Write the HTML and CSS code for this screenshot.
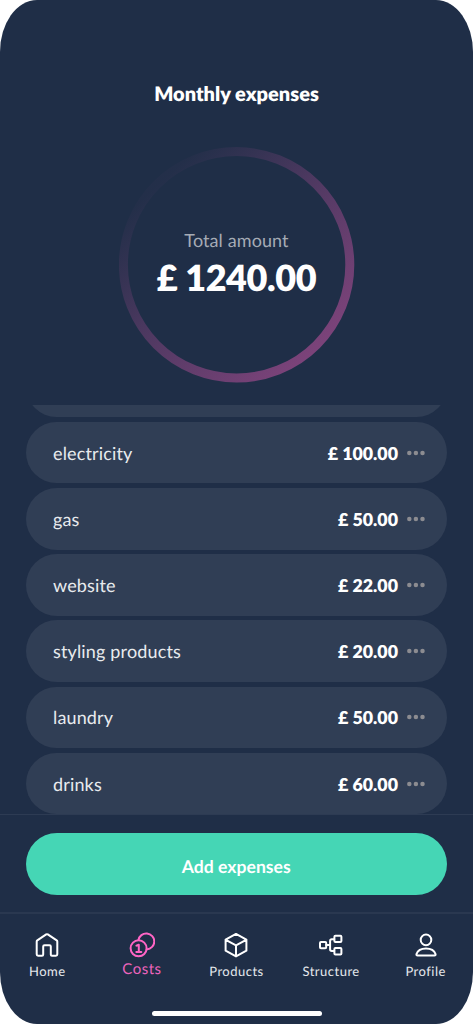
FILE: index.html
```html
<!DOCTYPE html>
<html lang="en">
<head>
<meta charset="utf-8">
<title>Monthly expenses</title>
<link rel="stylesheet" href="styles.css">
</head>
<body>
<svg width="0" height="0" class="defs" aria-hidden="true">
  <symbol id="dots" viewBox="0 0 18 6"><circle cx="2.3" cy="3" r="2.25"/><circle cx="8.9" cy="3" r="2.25"/><circle cx="15.5" cy="3" r="2.25"/></symbol>
</svg>
<div class="screen">
  <h1 class="title">Monthly expenses</h1>
  <section class="total">
    <svg class="ring" viewBox="0 0 236 236" aria-hidden="true">
      <defs>
        <linearGradient id="fade" x1="0.15" y1="0.15" x2="0.85" y2="0.9">
          <stop offset="0" stop-color="#85457f" stop-opacity="0.04"/>
          <stop offset="0.5" stop-color="#85457f" stop-opacity="0.52"/>
          <stop offset="1" stop-color="#85457f" stop-opacity="0.92"/>
        </linearGradient>
      </defs>
      <circle cx="117.6" cy="117.8" r="113.2" fill="none" stroke="url(#fade)" stroke-width="9"/>
    </svg>
    <div class="total-text">
      <span class="total-label">Total amount</span>
      <strong class="total-value">£ 1240.00</strong>
    </div>
  </section>
  <ul class="list">
    <li class="row"></li>
    <li class="row"><span class="name">electricity</span><span class="amount">£ 100.00</span><svg class="more"><use href="#dots"/></svg></li>
    <li class="row"><span class="name">gas</span><span class="amount">£ 50.00</span><svg class="more"><use href="#dots"/></svg></li>
    <li class="row"><span class="name">website</span><span class="amount">£ 22.00</span><svg class="more"><use href="#dots"/></svg></li>
    <li class="row"><span class="name">styling products</span><span class="amount">£ 20.00</span><svg class="more"><use href="#dots"/></svg></li>
    <li class="row"><span class="name">laundry</span><span class="amount">£ 50.00</span><svg class="more"><use href="#dots"/></svg></li>
    <li class="row"><span class="name">drinks</span><span class="amount">£ 60.00</span><svg class="more"><use href="#dots"/></svg></li>
  </ul>
  <div class="action"><button class="add">Add expenses</button></div>
  <nav class="tabs">
    <a class="tab">
      <svg class="icon" viewBox="0 0 26 26"><path d="M2.7 9.4V22.3Q2.7 23.7 4.1 23.7H8Q9.2 23.7 9.2 22.5V14.6Q9.2 13.3 10.5 13.3H15.5Q16.8 13.3 16.8 14.6V22.5Q16.8 23.7 18 23.7H21.9Q23.3 23.7 23.3 22.3V9.4Q23.3 8.7 22.7 8.3L13.8 2.4Q13 1.9 12.2 2.4L3.3 8.3Q2.7 8.7 2.7 9.4Z"/></svg>
      <span>Home</span>
    </a>
    <a class="tab active">
      <svg class="icon" viewBox="0 0 26 26"><circle cx="9.6" cy="16.3" r="8"/><path d="M9.4 8.1A8 8 0 1 1 17.8 17.4"/><path d="M7.4 13.7L9.8 12.7V19.7M7.3 20H12.3"/></svg>
      <span>Costs</span>
    </a>
    <a class="tab">
      <svg class="icon" viewBox="0 0 26 26"><path d="M13 1.9L23.4 7.6V18.7L13 24.4L2.6 18.7V7.6ZM2.8 7.8L13 13.3L23.2 7.8M13 13.3V24.2"/></svg>
      <span>Products</span>
    </a>
    <a class="tab">
      <svg class="icon" viewBox="0 0 26 26"><rect x="2" y="10" width="6.2" height="6.2" rx="1"/><rect x="16.4" y="3.7" width="7" height="6.4" rx="1"/><rect x="16.4" y="15.9" width="7" height="6.7" rx="1"/><path d="M8.2 13.1H12M16.2 7.2H13.8Q12.1 7.2 12.1 9V17.3Q12.1 19 13.8 19H16.2"/></svg>
      <span>Structure</span>
    </a>
    <a class="tab">
      <svg class="icon" viewBox="0 0 26 26"><circle cx="13" cy="7.9" r="5.3"/><path d="M4.6 23.5H21.4Q22.9 23.5 22.5 22C21.4 18.8 17.6 16.6 13 16.6S4.6 18.8 3.5 22Q3.1 23.5 4.6 23.5Z"/></svg>
      <span>Profile</span>
    </a>
  </nav>
  <div class="home-bar"></div>
</div>
</body>
</html>
```

FILE: styles.css
```css
* { box-sizing: border-box; }

body {
  margin: 0;
  background: #fff;
  font-family: Lato, sans-serif;
  text-rendering: geometricPrecision;
}

.defs { display: none; }

.screen {
  display: flex;
  flex-direction: column;
  width: 473px;
  height: 1024px;
  overflow: hidden;
  border-radius: 37px / 52px;
  background: #1f2e47;
  color: #fff;
}

.title {
  height: 146px;
  margin: 0;
  padding-top: 82px;
  font-size: 20px;
  font-weight: 800;
  line-height: 24px;
  text-align: center;
}

.total {
  display: grid;
  place-items: center;
  height: 259px;
  padding-bottom: 21px;
}

.ring, .total-text { grid-area: 1 / 1; }

.ring {
  width: 236px;
  height: 236px;
}

.total-text {
  display: flex;
  flex-direction: column;
  align-items: center;
}

.total-label {
  font-size: 18px;
  line-height: 24px;
  letter-spacing: 0.1px;
  color: #a5abb5;
}

.total-value {
  font-size: 36px;
  font-weight: 800;
  line-height: 50px;
  letter-spacing: -0.4px;
}

.list {
  display: flex;
  flex-direction: column;
  justify-content: flex-end;
  gap: 4.6px;
  height: 410px;
  margin: 0 26.5px 0 26px;
  padding: 0 0 0.6px;
  overflow: hidden;
  list-style: none;
}

.row {
  display: flex;
  flex: none;
  align-items: center;
  height: 61.6px;
  padding: 0 22px 0 27px;
  border-radius: 31px;
  background: #303e55;
  font-size: 18px;
  line-height: 24px;
}

.name {
  flex: 1;
  color: #e8ebee;
  letter-spacing: 0.15px;
}

.amount {
  font-size: 17.8px;
  font-weight: 800;
}

.more {
  width: 18px;
  height: 6px;
  margin-left: 8.5px;
  fill: #8c8c91;
}

.action {
  height: 98px;
  margin-top: -1px;
  padding: 18px 26.5px 0 26px;
  border-top: 1px solid #2d3b53;
}

.add {
  display: block;
  width: 100%;
  height: 62px;
  padding: 5px 0 0;
  border: 0;
  border-radius: 31px;
  background: #45d6b5;
  color: #fff;
  font: 700 17.6px/24px Lato, sans-serif;
  text-rendering: inherit;
}

.tabs {
  display: grid;
  grid-template-columns: repeat(5, 94.6px);
  height: 99px;
  padding-top: 18px;
  border-top: 2px solid #2a3850;
}

.tab {
  display: flex;
  flex-direction: column;
  align-items: center;
  font-size: 13px;
  line-height: 26px;
  letter-spacing: 0.5px;
  color: #e5e8ec;
}

.icon {
  width: 26px;
  height: 26px;
  fill: none;
  stroke: #fff;
  stroke-width: 2;
  stroke-linecap: round;
  stroke-linejoin: round;
}

.active {
  font-size: 15px;
  line-height: 23px;
  color: #ed64bd;
}

.active .icon { stroke: #ff65c5; }

.home-bar {
  width: 170px;
  height: 5.4px;
  margin: 0 auto;
  border-radius: 3px;
  background: #fff;
}
```
